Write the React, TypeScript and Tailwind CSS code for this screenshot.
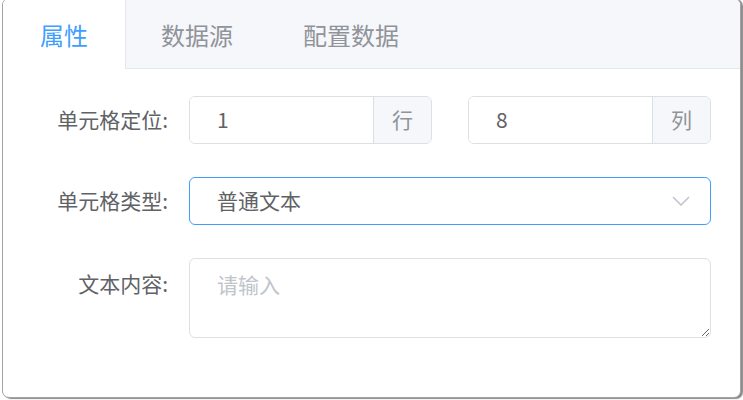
import { useState } from "react";

const TABS = ["属性", "数据源", "配置数据"];

function Chevron() {
  return (
    <svg width="18" height="10" viewBox="0 0 18 10" fill="none">
      <path d="M1 1l8 8 8-8" stroke="#c0c4cc" strokeWidth="1.6" />
    </svg>
  );
}

function AppendInput({ value, suffix }: { value: string; suffix: string }) {
  return (
    <div className="flex h-[48px] w-[243px] rounded-[6px] border border-[#dcdfe6] overflow-hidden">
      <input
        defaultValue={value}
        className="flex-1 min-w-0 pl-[27px] text-[21px] text-[#606266] outline-none bg-white"
      />
      <div className="w-[58px] border-l border-[#dcdfe6] bg-[#f5f7fa] flex items-center justify-center text-[21px] text-[#909399]">
        {suffix}
      </div>
    </div>
  );
}

export default function App() {
  const [active, setActive] = useState(0);

  return (
    <div
      className="w-[743px] h-[400px] bg-white overflow-hidden"
      style={{ fontFamily: '"Noto Sans CJK SC", "Noto Sans", sans-serif' }}
    >
      <div className="-mt-[2px] ml-[2px] w-[739px] h-[400px] rounded-[7px] border border-[#a3a3a3] shadow-[2px_1px_1px_#8a8a8a] bg-white overflow-hidden flex flex-col">
        {/* tabs */}
        <div className="flex h-[70px] pt-[1px] bg-[#f5f7fa] border-b border-[#e4e7ed]">
          {TABS.map((t, i) => (
            <button
              key={t}
              onClick={() => setActive(i)}
              className={
                i === active
                  ? "h-[69px] px-[37px] text-[24px] text-[#409eff] bg-white border-r border-[#e4e7ed]"
                  : "h-[69px] px-[35px] text-[24px] text-[#909399]"
              }
            >
              {t}
            </button>
          ))}
        </div>

        {/* form */}
        <div className="flex flex-col gap-[33px] pt-[27px] pr-[29px]">
          <div className="flex items-center">
            <label className="w-[186px] pr-[21px] text-right text-[21px] text-[#606266]">单元格定位:</label>
            <div className="flex gap-[36px]">
              <AppendInput value="1" suffix="行" />
              <AppendInput value="8" suffix="列" />
            </div>
          </div>

          <div className="flex items-center">
            <label className="w-[186px] pr-[21px] text-right text-[21px] text-[#606266]">单元格类型:</label>
            <div className="flex-1 h-[48px] rounded-[6px] border border-[#409eff] flex items-center justify-between pl-[27px] pr-[20px]">
              <span className="text-[21px] text-[#606266]">普通文本</span>
              <Chevron />
            </div>
          </div>

          <div className="flex items-start">
            <label className="w-[186px] pr-[21px] pt-[10px] text-right text-[21px] text-[#606266]">文本内容:</label>
            <textarea
              placeholder="请输入"
              className="flex-1 h-[80px] rounded-[6px] border border-[#dcdfe6] px-[27px] py-[10px] text-[21px] text-[#606266] placeholder:text-[#c0c4cc] outline-none resize-y"
            />
          </div>
        </div>
      </div>
    </div>
  );
}
